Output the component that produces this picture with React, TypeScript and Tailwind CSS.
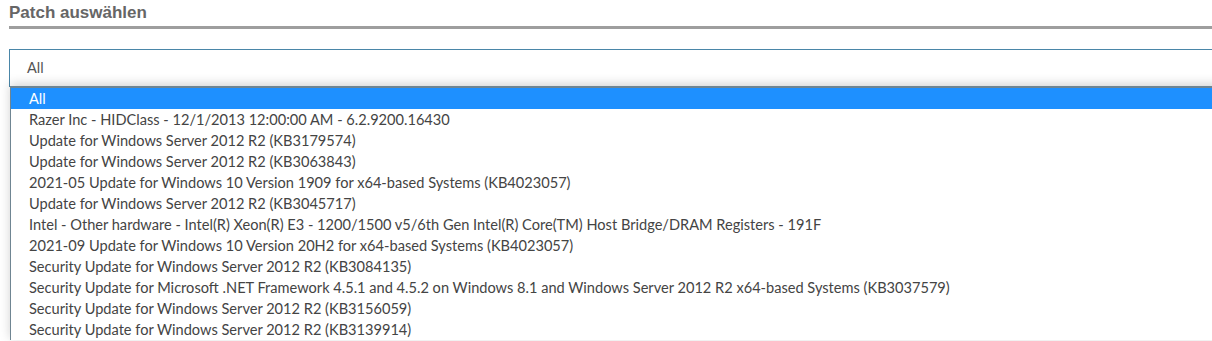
const OPTIONS = [
  'All',
  'Razer Inc - HIDClass - 12/1/2013 12:00:00 AM - 6.2.9200.16430',
  'Update for Windows Server 2012 R2 (KB3179574)',
  'Update for Windows Server 2012 R2 (KB3063843)',
  '2021-05 Update for Windows 10 Version 1909 for x64-based Systems (KB4023057)',
  'Update for Windows Server 2012 R2 (KB3045717)',
  'Intel - Other hardware - Intel(R) Xeon(R) E3 - 1200/1500 v5/6th Gen Intel(R) Core(TM) Host Bridge/DRAM Registers - 191F',
  '2021-09 Update for Windows 10 Version 20H2 for x64-based Systems (KB4023057)',
  'Security Update for Windows Server 2012 R2 (KB3084135)',
  'Security Update for Microsoft .NET Framework 4.5.1 and 4.5.2 on Windows 8.1 and Windows Server 2012 R2 x64-based Systems (KB3037579)',
  'Security Update for Windows Server 2012 R2 (KB3156059)',
  'Security Update for Windows Server 2012 R2 (KB3139914)',
];

export default function App() {
  return (
    <div className="relative w-[1212px] h-[341px] overflow-hidden bg-white pl-[9px] pt-[3px]">
      {/* Heading */}
      <h2 className="text-[17px] leading-[20px] font-bold text-[#666] font-['Liberation_Sans',Arial,sans-serif]">
        Patch auswählen
      </h2>
      <div className="mt-[3px] h-[3px] bg-[#9e9e9e] mr-[-10px]" />

      {/* Select */}
      <div className="relative mt-[20px]">
        <div className="h-[38px] w-[1230px] border border-[#4a86a8] flex items-center pl-[17px] text-[14.5px] text-[#555] font-['Lato',sans-serif]">
          All
        </div>

        {/* Open list */}
        <div className="absolute left-[1px] top-[37px] w-[1230px] bg-white border-l border-t-2 border-[#6f8592] shadow-[0_-2px_10px_rgba(0,0,0,0.18)] font-['Lato',sans-serif] text-[14.6px] text-[#444]">
          {OPTIONS.map((opt, i) => (
            <div
              key={i}
              className={`h-[21px] leading-[21px] pl-[18px] whitespace-nowrap ${
                i === 0 ? 'bg-[#1e90ff] text-white' : ''
              }`}
            >
              {opt}
            </div>
          ))}
        </div>
      </div>
    </div>
  );
}
